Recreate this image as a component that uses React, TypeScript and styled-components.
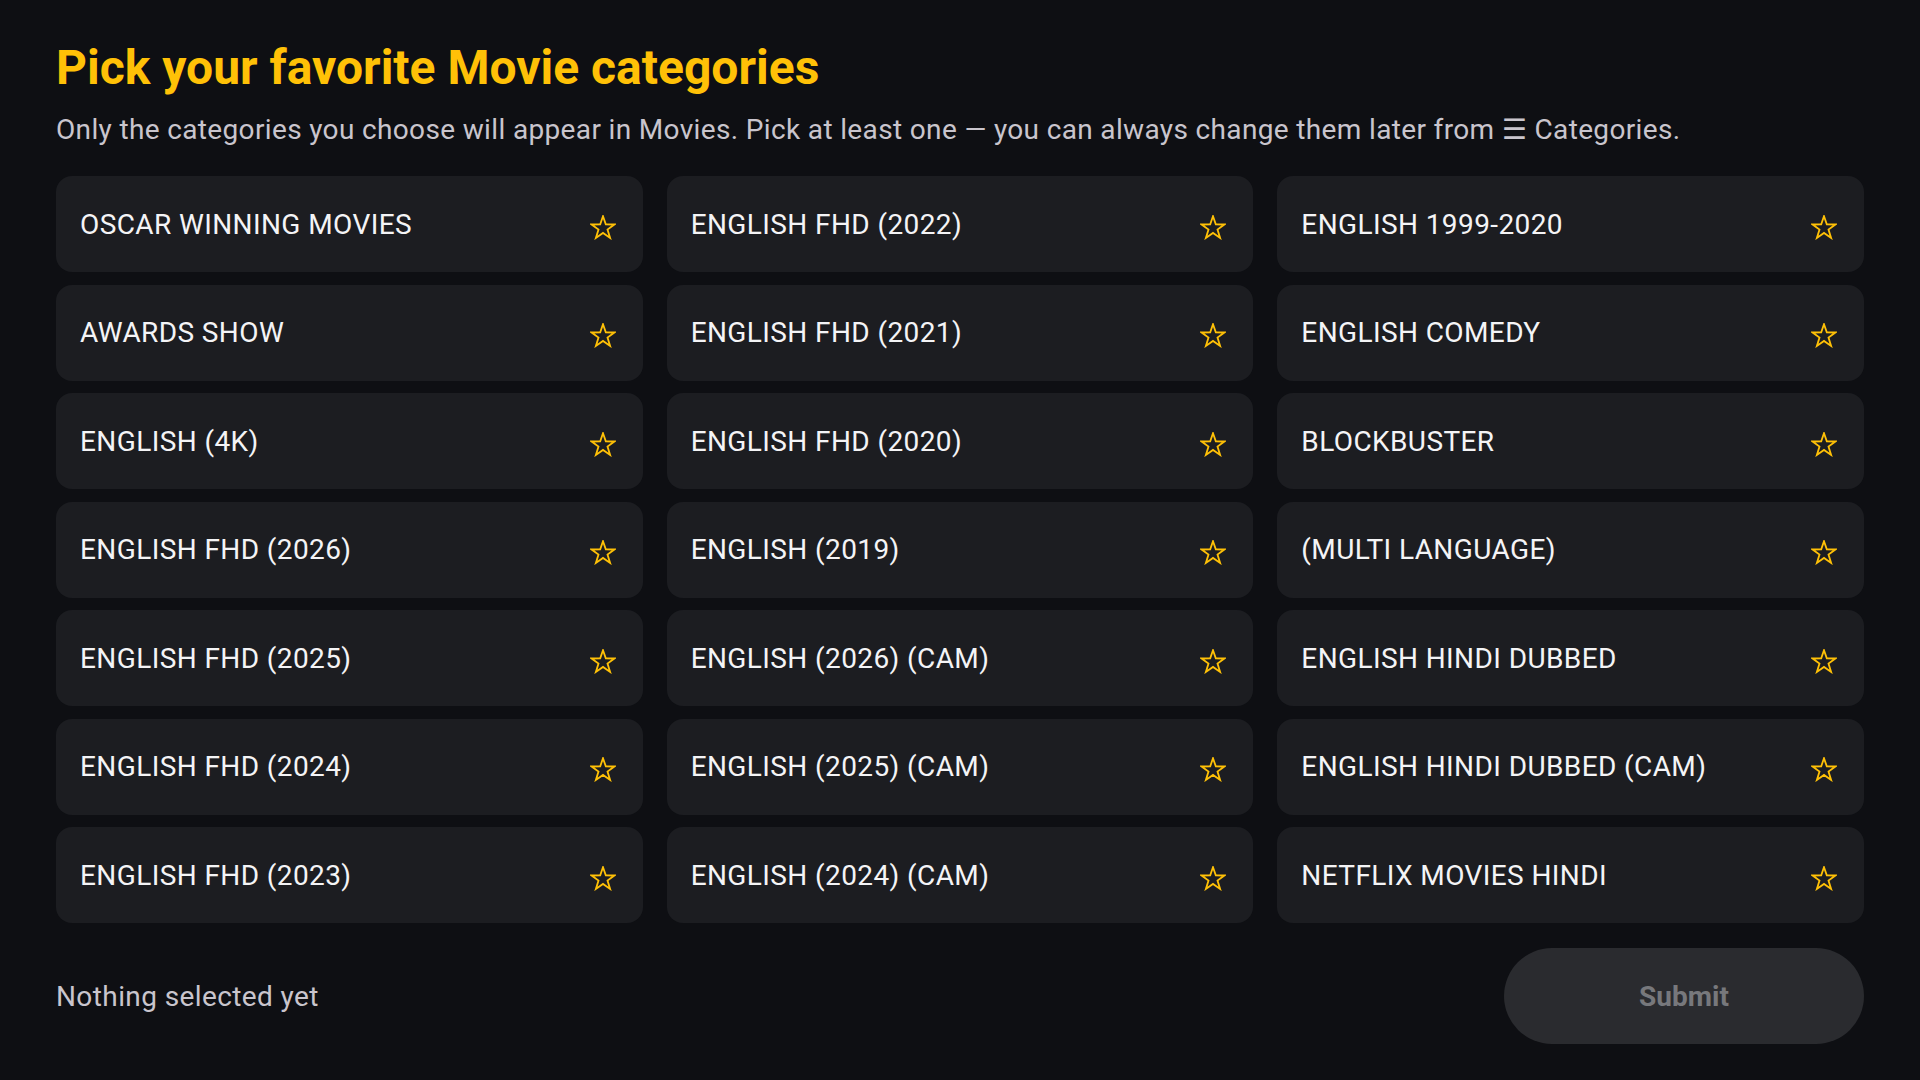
import React from "react";
import styled, { createGlobalStyle } from "styled-components";

const GlobalStyle = createGlobalStyle`
  html, body {
    margin: 0;
    padding: 0;
    background: #0e0f13;
  }
  body {
    font-family: Roboto, "Noto Sans", "DejaVu Sans", sans-serif;
    -webkit-font-smoothing: antialiased;
  }
  * { box-sizing: border-box; }
`;

const Page = styled.div`
  width: 1920px;
  height: 1080px;
  background: #0e0f13;
  padding: 39px 56px 0 56px;
  display: flex;
  flex-direction: column;
`;

const Title = styled.h1`
  margin: 0;
  font-size: 48px;
  line-height: 58px;
  font-weight: 700;
  color: #ffc107;
`;

const Subtitle = styled.p`
  margin: 15.5px 0 0 0;
  font-size: 28px;
  line-height: 34px;
  letter-spacing: 0.35px;
  color: #c9c5cd;
`;

const Grid = styled.div`
  margin-top: 29.5px;
  display: grid;
  grid-template-columns: repeat(3, 1fr);
  column-gap: 24px;
  row-gap: 12.5px;
`;

const Card = styled.button`
  height: 96px;
  border: none;
  border-radius: 16px;
  background: #1c1d21;
  padding: 0 27px 0 24px;
  display: flex;
  align-items: center;
  justify-content: space-between;
  font-family: inherit;
  cursor: pointer;
  text-align: left;
`;

const CardLabel = styled.span`
  font-size: 28px;
  font-weight: 400;
  color: #f4f4f6;
  letter-spacing: 0.4px;
`;

const StarWrap = styled.span`
  display: flex;
  width: 26px;
  height: 25px;
  margin-top: 6px;
`;

const Footer = styled.div`
  margin-top: 25px;
  display: flex;
  align-items: center;
  justify-content: space-between;
`;

const Status = styled.span`
  font-size: 28px;
  letter-spacing: 0.4px;
  color: #c9c5cd;
`;

const SubmitButton = styled.button`
  width: 360px;
  height: 96px;
  border: none;
  border-radius: 48px;
  background: #2a2b2f;
  color: #77787c;
  font-family: inherit;
  font-size: 28px;
  font-weight: 700;
`;

const Star = () => (
  <StarWrap>
    <svg width="26" height="25" viewBox="0 0 26 25" fill="none">
      <polygon
        points="13,1.2 15.8,9.4 24.4,9.5 17.5,14.6 20.1,22.9 13,17.9 5.9,22.9 8.5,14.6 1.6,9.5 10.2,9.4"
        stroke="#ffc107"
        strokeWidth="1.8"
        strokeLinejoin="miter"
      />
    </svg>
  </StarWrap>
);

const categories = [
  "OSCAR WINNING MOVIES",
  "ENGLISH FHD (2022)",
  "ENGLISH 1999-2020",
  "AWARDS SHOW",
  "ENGLISH FHD (2021)",
  "ENGLISH COMEDY",
  "ENGLISH (4K)",
  "ENGLISH FHD (2020)",
  "BLOCKBUSTER",
  "ENGLISH FHD (2026)",
  "ENGLISH (2019)",
  "(MULTI LANGUAGE)",
  "ENGLISH FHD (2025)",
  "ENGLISH (2026) (CAM)",
  "ENGLISH HINDI DUBBED",
  "ENGLISH FHD (2024)",
  "ENGLISH (2025) (CAM)",
  "ENGLISH HINDI DUBBED (CAM)",
  "ENGLISH FHD (2023)",
  "ENGLISH (2024) (CAM)",
  "NETFLIX MOVIES HINDI",
];

export default function App() {
  return (
    <>
      <GlobalStyle />
      <Page>
        <Title>Pick your favorite Movie categories</Title>
        <Subtitle>
          Only the categories you choose will appear in Movies. Pick at least one — you can always
          change them later from ☰ Categories.
        </Subtitle>
        <Grid>
          {categories.map((c) => (
            <Card key={c}>
              <CardLabel>{c}</CardLabel>
              <Star />
            </Card>
          ))}
        </Grid>
        <Footer>
          <Status>Nothing selected yet</Status>
          <SubmitButton disabled>Submit</SubmitButton>
        </Footer>
      </Page>
    </>
  );
}
